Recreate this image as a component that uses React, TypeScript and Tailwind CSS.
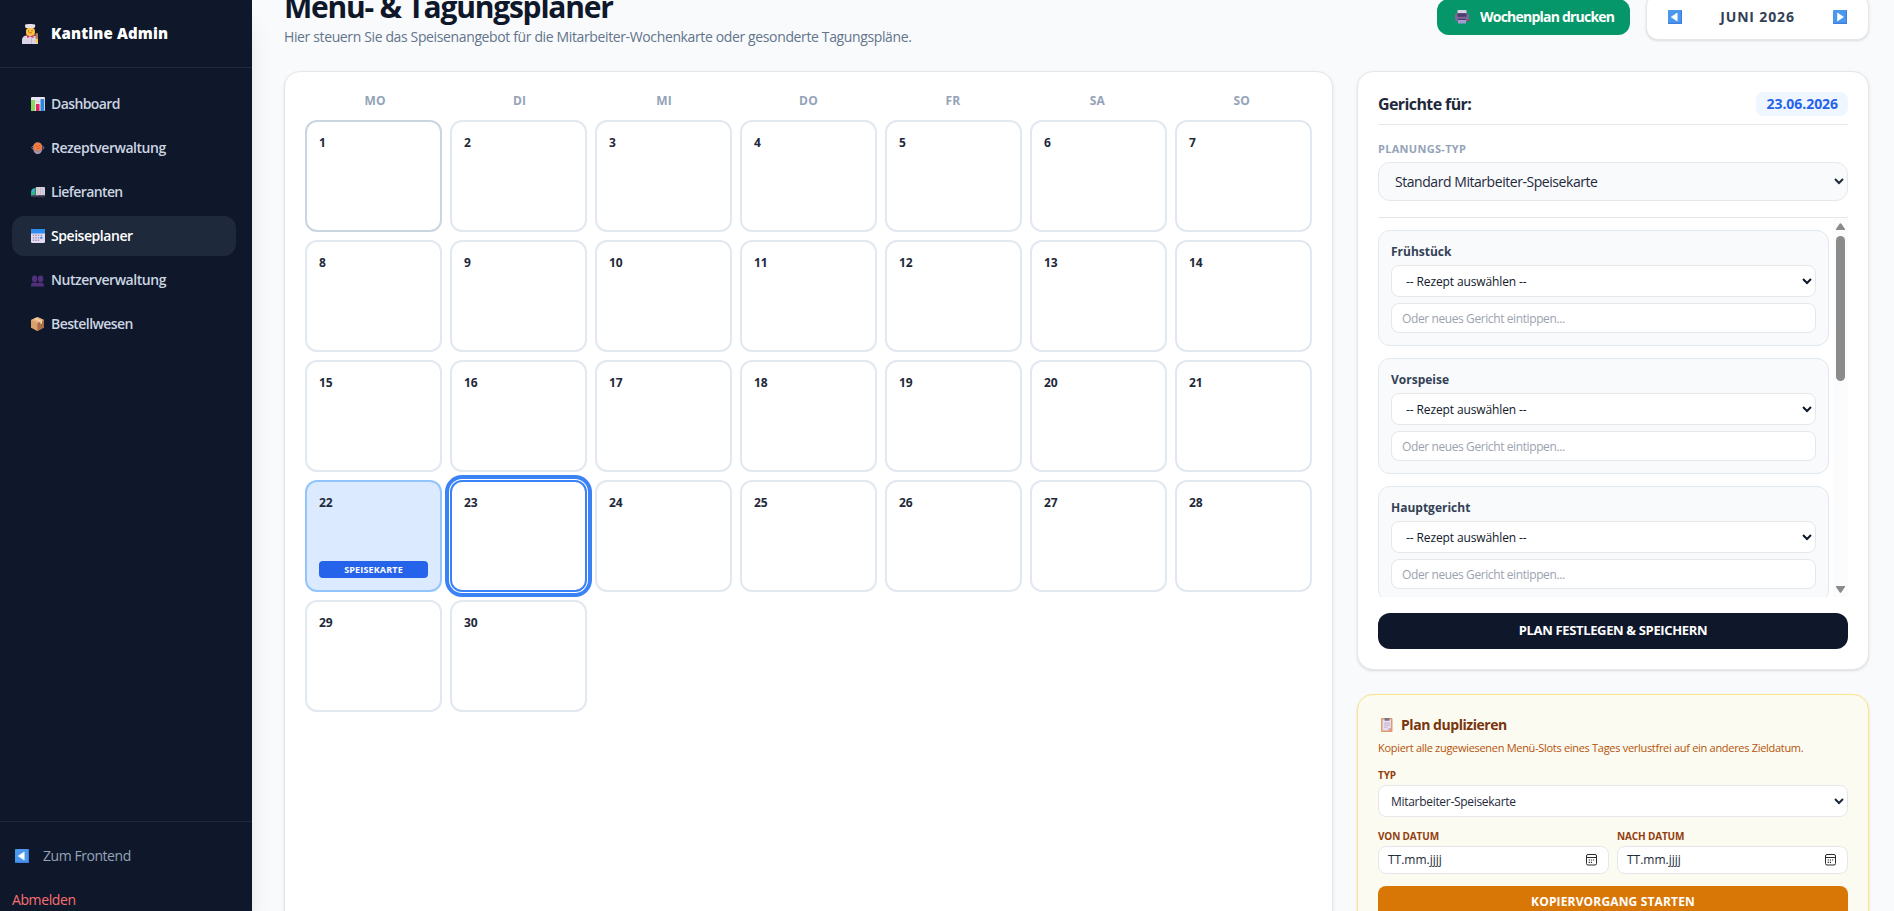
import type { ReactNode } from "react";
import clsx from "clsx";

const weekdays = ["Mo", "Di", "Mi", "Do", "Fr", "Sa", "So"];
const days = Array.from({ length: 30 }, (_, i) => i + 1);
const slots = ["Frühstück", "Vorspeise", "Hauptgericht"];

/* Icons */
function ChefIcon() {
  return (
    <svg className="w-4 h-5 shrink-0" viewBox="0 0 16 20">
      <rect x="4" y="4" width="9" height="8" rx="3" fill="#f0a63a" />
      <path d="M3 1.500C3 .5 4 0 5 .3 6 0 7 0 8 0s2 0 3 .3c1-.3 2.300.2 2.300 1.200L12.500 4h-9z" fill="#e6dfea" />
      <rect x="4.500" y="4" width="7.500" height="7" rx="3" fill="#ffc83d" />
      <circle cx="6.600" cy="6.800" r=".6" fill="#5b3a29" />
      <circle cx="10" cy="6.800" r=".6" fill="#5b3a29" />
      <path d="M6.500 8.800h3.500" stroke="#c2532f" strokeWidth=".8" />
      <path d="M0 20v-4c0-3 2-4.500 5-4.500h6c3 0 5 1.500 5 4.500v4z" fill="#dcd5e8" />
      <path d="M5 11l3 1.500L11.500 11v3L8 12.800 5 14z" fill="#e0344f" />
      <path d="M9.500 14v6" stroke="#b9aec9" strokeWidth=".7" />
      <rect x="13.500" y="9" width="2.500" height="6" rx="1.200" fill="#b9805b" />
      <rect x="13.300" y="15" width="2.500" height="4" rx="1" fill="#ffc83d" />
    </svg>
  );
}

function ChartIcon() {
  return (
    <svg className="w-[14px] h-[14px] shrink-0" viewBox="0 0 14 14">
      <rect width="14" height="14" rx="1" fill="#e9e4ef" />
      <path d="M0 4.500h14M0 9h14" stroke="#c9c1d4" strokeWidth=".5" />
      <rect y="3" width="4" height="11" fill="#86d95b" />
      <rect x="5" y="7" width="3.500" height="7" fill="#e0245e" />
      <rect x="9.500" y="2" width="3.700" height="12" fill="#2b87dd" />
    </svg>
  );
}

function PotIcon() {
  return (
    <svg className="w-[14px] h-[14px] shrink-0" viewBox="0 0 14 14">
      <path d="M2.300 5L.6 6.500 2 8.500M11.200 5l1.900 1.500-1.400 2" fill="none" stroke="#8b7a99" strokeWidth="1" />
      <path d="M2.200 7h9c0 3.500-1.500 6-4.500 6S2.200 10.500 2.200 7z" fill="#a694b4" />
      <circle cx="6.700" cy="6" r="4.700" fill="#9a8490" />
      <circle cx="6.700" cy="5.800" r="4" fill="#f47c3c" />
      <path d="M5 4.500l1.500 1M8 4l1 1M6.200 7.500l2-.5" stroke="#cf4a28" strokeWidth=".9" />
    </svg>
  );
}

function TruckIcon() {
  return (
    <svg className="w-[14px] h-[14px] shrink-0" viewBox="0 0 14 14">
      <rect x="4.800" y="2" width="9.200" height="8.500" rx=".8" fill="#d9d2de" />
      <path d="M7 2.500v7.500M9.500 2.500v7.500M12 2.500v7.500" stroke="#b5abc0" strokeWidth=".6" />
      <path d="M0 7.500C0 4.500 1.500 3 4.500 3v7.500H0z" fill="#2fb782" />
      <path d="M.8 7C1 5 1.700 4.300 3 4.200V7z" fill="#4aa3f0" />
      <path d="M0 10.300h14v1.200H0z" fill="#6b5b7e" />
      <circle cx="3" cy="11.500" r="1.300" fill="#3c2f4d" />
      <circle cx="8.500" cy="11.500" r="1.300" fill="#3c2f4d" />
      <circle cx="11.700" cy="11.500" r="1.300" fill="#3c2f4d" />
    </svg>
  );
}

function CalendarIcon() {
  return (
    <svg className="w-[14px] h-[14px] shrink-0" viewBox="0 0 14 14">
      <rect width="14" height="14" rx="1.500" fill="#e4dcf3" />
      <path d="M0 4.500V1.500C0 .6.600 0 1.500 0h11c.9 0 1.500.6 1.500 1.500v3z" fill="#2c8df0" />
      <path d="M2.500 5.500v7M5 5.500v7M7.500 5.500v7M10.500 5.500v5" stroke="#9d93b3" strokeWidth="1.400" strokeDasharray="1.600 .9" />
      <rect x="9.300" y="7.700" width="2" height="2" fill="#2c8df0" />
    </svg>
  );
}

function UsersIcon() {
  return (
    <svg className="w-[14px] h-[14px] shrink-0" viewBox="0 0 14 14">
      <rect x="1" y="2.500" width="5.300" height="6.500" rx="2.200" fill="#50307c" />
      <rect x="7" y="2.500" width="5.300" height="6.500" rx="2.200" fill="#50307c" />
      <path d="M0 13.500V12C0 10.500 1.200 9.500 3 9.500h1.500c1 0 1.600.3 2.100.8.500-.5 1.200-.8 2.200-.8h1.200c1.800 0 3 1 3 2.500v1.500z" fill="#50307c" />
    </svg>
  );
}

function BoxIcon() {
  return (
    <svg className="w-[14px] h-[14px] shrink-0" viewBox="0 0 14 14">
      <path d="M6.500 0L13 3v7.500L6.500 14 0 10.500V3z" fill="#c98f5f" />
      <path d="M0 3l6.500 3v8L0 10.500z" fill="#d9a06c" />
      <path d="M6.500 6L13 3v7.500L6.500 14z" fill="#a96f49" />
      <path d="M0 3l6.500-3L13 3 6.500 6z" fill="#e6b482" />
      <path d="M2.800 1.700l6.600 3v2.500l1.600-.8V4L4.500 1z" fill="#f3d6b0" />
    </svg>
  );
}

function PrinterIcon() {
  return (
    <svg className="w-[14px] h-[14px] shrink-0" viewBox="0 0 14 14">
      <rect x="2.500" y="0" width="9" height="5" rx=".6" fill="#d9cfe6" />
      <rect x="0" y="3.300" width="14" height="8" rx="1.500" fill="#7d6a9c" />
      <rect x="2.500" y="3.300" width="9" height="3.500" fill="#4f3b6b" />
      <rect x="3" y="9" width="8" height="4.500" rx=".5" fill="#a59bd0" />
      <path d="M3 9.300h8" stroke="#3b2a52" strokeWidth="1" />
      <rect x="12.400" y="9" width="1.600" height="2" fill="#e0245e" />
    </svg>
  );
}

function ClipboardIcon() {
  return (
    <svg className="w-3 h-[14px] shrink-0" viewBox="0 0 12 14">
      <rect width="11.500" height="14" rx="1" y="0" fill="#e09a72" />
      <path d="M1.500 1.500h8.500v8.500l-2.500 2.500h-6z" fill="#e6def0" />
      <path d="M10 10l-2.500 2.500V10z" fill="#b7aac9" />
      <rect x="3.500" y="0" width="5" height="2.800" rx=".8" fill="#77718c" />
      <path d="M3 5.200h6M3 7.200h6M3 9.200h3.500" stroke="#b4a9c4" strokeWidth=".8" />
    </svg>
  );
}

function ArrowIcon({ right = false }: { right?: boolean }) {
  return (
    <svg className="w-[14px] h-[14px] shrink-0" viewBox="0 0 14 14">
      <rect width="14" height="14" rx=".8" fill="#4a97ee" />
      <path d="M0 13.300h14M13.500 0v14" stroke="#3a6fd0" strokeWidth="1.200" opacity=".6" />
      <path
        d={right ? "M10.500 7l-6-4v8z" : "M3.200 7l6-4v8z"}
        fill="#fff"
        stroke="#fff"
        strokeWidth=".6"
        strokeLinejoin="round"
      />
    </svg>
  );
}

function DateIcon() {
  return (
    <svg className="w-[11px] h-3 shrink-0" viewBox="0 0 11 12" fill="none" stroke="#2b2b2b">
      <rect x=".5" y=".5" width="10" height="10.500" rx="1.500" />
      <path d="M.5 3.500h10" />
      <path d="M2.700 6h6M2.700 8.300h4" strokeWidth="1.200" strokeDasharray="1.200 .9" />
    </svg>
  );
}

const navItems = [
  { label: "Dashboard", icon: <ChartIcon />, track: "tracking-[-0.6px]" },
  { label: "Rezeptverwaltung", icon: <PotIcon />, track: "tracking-[-0.46px]" },
  { label: "Lieferanten", icon: <TruckIcon />, track: "tracking-[-0.6px]" },
  { label: "Speiseplaner", icon: <CalendarIcon />, track: "tracking-[-0.45px]", active: true },
  { label: "Nutzerverwaltung", icon: <UsersIcon />, track: "tracking-[-0.46px]" },
  { label: "Bestellwesen", icon: <BoxIcon />, track: "tracking-[-0.58px]" },
];

function Sidebar() {
  return (
    <aside className="w-[252px] shrink-0 h-full bg-[#0f172a] flex flex-col shadow-xl z-10">
      <div className="h-[68px] shrink-0 border-b border-[#1e293b] flex items-center gap-[13px] pl-[22px]">
        <ChefIcon />
        <span className="text-[15px] font-extrabold text-white tracking-[0.15px] whitespace-nowrap">Kantine Admin</span>
      </div>
      <nav className="flex-1 flex flex-col gap-1 pt-4 pl-3 pr-4">
        {navItems.map((item) => (
          <a
            key={item.label}
            className={clsx(
              "h-10 rounded-xl flex items-center gap-1.5 pl-[19px] text-sm font-semibold",
              item.active ? "bg-[#1e293b] text-white" : "text-[#cbd5e1]"
            )}
          >
            {item.icon}
            <span className={item.track}>{item.label}</span>
          </a>
        ))}
      </nav>
      <div className="h-[90px] shrink-0 border-t border-[#1e293b] pt-6 pl-3 text-sm">
        <a className="flex items-center gap-3.5 h-5 pl-[3px] text-[#94a3b8]">
          <ArrowIcon />
          <span className="tracking-[-0.45px]">Zum Frontend</span>
        </a>
        <a className="block mt-6 h-5 leading-5 text-[#f87171] tracking-[-0.4px]">Abmelden</a>
      </div>
    </aside>
  );
}

function DayCell({ day }: { day: number }) {
  const planned = day === 22;
  const selected = day === 23;
  return (
    <div
      className={clsx(
        "h-28 rounded-xl border-2 p-3 flex flex-col justify-between",
        planned && "bg-[#dbeafe] border-[#93c5fd]",
        selected && "bg-white border-[#3b82f6] ring-4 ring-[#3b82f6] ring-offset-1",
        !planned && !selected && "bg-white",
        day === 1 ? "border-[#cbd5e1]" : !planned && !selected && "border-[#e2e8f0]"
      )}
    >
      <span className="text-xs leading-[18px] font-bold text-[#1e293b]">{day}</span>
      {planned && (
        <span className="h-[17px] rounded bg-[#2563eb] text-white text-[9px] leading-[17px] font-bold text-center tracking-[0.15px] uppercase">
          Speisekarte
        </span>
      )}
    </div>
  );
}

function Calendar() {
  return (
    <section className="w-[1049px] h-[900px] shrink-0 bg-white border border-[#e5e7eb] rounded-2xl px-5 pt-[21px] shadow-sm">
      <div className="grid grid-cols-7 gap-1 mb-[11px] text-center text-xs font-bold text-[#94a3b8] uppercase tracking-[0.2px]">
        {weekdays.map((d) => (
          <div key={d}>{d}</div>
        ))}
      </div>
      <div className="grid grid-cols-7 gap-2">
        {days.map((d) => (
          <DayCell key={d} day={d} />
        ))}
      </div>
    </section>
  );
}

function MealSlot({ name }: { name: string }) {
  return (
    <div className="h-[116px] shrink-0 bg-[#f8fafc] border border-[#e2e8f0] rounded-xl px-3 pt-3">
      <label className="block h-[22px] leading-[18px] text-xs font-bold text-[#334155]">{name}</label>
      <select className="block w-full h-8 px-2.5 bg-white border border-[#e5e7eb] rounded-lg text-xs text-[#0f172a] tracking-[-0.12px]">
        <option>-- Rezept auswählen --</option>
      </select>
      <input
        className="block w-full h-[30px] mt-1.5 px-2.5 bg-white border border-[#e5e7eb] rounded-lg text-xs tracking-[-0.4px] placeholder:text-[#9ca3af]"
        placeholder="Oder neues Gericht eintippen..."
      />
    </div>
  );
}

function Scrollbar() {
  return (
    <div className="w-[15px] h-full bg-[#fcfcfc] flex flex-col items-center">
      <svg className="w-[9px] h-[7px] mt-[5px]" viewBox="0 0 9 7">
        <path d="M3.600.8a1 1 0 0 1 1.800 0L9 6v1H0V6z" fill="#8b8b8b" />
      </svg>
      <div className="w-[9px] h-[145px] mt-1.5 rounded-full bg-[#8b8b8b]" />
      <svg className="w-[9px] h-[7px] mt-auto mb-1" viewBox="0 0 9 7">
        <path d="M3.600 6.200a1 1 0 0 0 1.800 0L9 1V0H0v1z" fill="#8b8b8b" />
      </svg>
    </div>
  );
}

function PlanCard() {
  return (
    <section className="h-[599px] shrink-0 bg-white border border-[#e5e7eb] rounded-2xl px-5 pt-5 shadow-sm">
      <div className="flex items-start justify-between h-[33px] border-b border-[#e5e7eb]">
        <h2 className="text-base leading-6 font-bold text-[#1e293b] tracking-[-0.6px]">Gerichte für:</h2>
        <span className="h-6 leading-6 px-2.5 rounded-lg bg-[#eff6ff] text-[#2563eb] text-sm font-bold tracking-[-0.05px]">
          23.06.2026
        </span>
      </div>
      <label className="block mt-4 h-[21px] leading-4 text-[11px] font-bold text-[#94a3b8] tracking-[0.3px]">PLANUNGS-TYP</label>
      <select className="block w-full h-[39px] px-3 bg-[#f8fafc] border border-[#e5e7eb] rounded-xl text-sm text-[#1e293b] tracking-[-0.45px]">
        <option>Standard Mitarbeiter-Speisekarte</option>
      </select>
      <div className="mt-4 h-[380px] border-t border-[#e5e7eb] flex gap-1 overflow-hidden">
        <div className="flex-1 pt-3 flex flex-col gap-3">
          {slots.map((s) => (
            <MealSlot key={s} name={s} />
          ))}
        </div>
        <Scrollbar />
      </div>
      <button className="block w-full h-9 mt-4 rounded-xl bg-[#0f172a] text-white text-[13px] font-bold tracking-[-0.35px]">
        PLAN FESTLEGEN &amp; SPEICHERN
      </button>
    </section>
  );
}

function AmberLabel({ children }: { children: ReactNode }) {
  return (
    <label className="block h-[18px] leading-4 text-[10px] font-bold text-[#92400e] tracking-[-0.15px]">{children}</label>
  );
}

function DateField({ label }: { label: string }) {
  return (
    <div className="flex-1">
      <AmberLabel>{label}</AmberLabel>
      <div className="h-7 pl-[9px] pr-[11px] bg-white border border-[#e5e7eb] rounded-lg flex items-center justify-between text-xs text-[#1e293b]">
        <span>TT.mm.jjjj</span>
        <DateIcon />
      </div>
    </div>
  );
}

function CopyCard() {
  return (
    <section className="h-[260px] shrink-0 bg-[#fcfbf1] border border-[#fde68a] rounded-2xl px-5 pt-5 shadow-sm">
      <h3 className="flex items-center gap-2 h-5 pl-[3px] text-sm font-bold text-[#78350f]">
        <ClipboardIcon />
        <span className="tracking-[-0.45px]">Plan duplizieren</span>
      </h3>
      <p className="mt-1 h-[18px] leading-[18px] text-[11px] text-[#b45309] tracking-[-0.3px] whitespace-nowrap">
        Kopiert alle zugewiesenen Menü-Slots eines Tages verlustfrei auf ein anderes Zieldatum.
      </p>
      <div className="mt-[10px]">
        <AmberLabel>TYP</AmberLabel>
        <select className="block w-full h-8 px-2 bg-white border border-[#e5e7eb] rounded-lg text-xs text-[#1e293b] tracking-[-0.3px]">
          <option>Mitarbeiter-Speisekarte</option>
        </select>
      </div>
      <div className="mt-[11px] flex gap-2">
        <DateField label="VON DATUM" />
        <DateField label="NACH DATUM" />
      </div>
      <button className="block w-full h-8 mt-3 rounded-lg bg-[#d97706] text-white text-xs font-bold tracking-[0.15px]">
        KOPIERVORGANG STARTEN
      </button>
    </section>
  );
}

export default function App() {
  return (
    <div className="w-[1894px] h-[911px] overflow-hidden flex bg-[#f8fafc] font-['Open_Sans','Noto_Sans',sans-serif]">
      <Sidebar />
      <main className="flex-1 pl-8 pr-[25px]">
        {/* Header, scrolled slightly out of view */}
        <header className="-mt-[13px] h-[60px] mb-6 flex items-center justify-between">
          <div>
            <h1 className="text-3xl leading-10 font-bold text-[#0f172a] tracking-[-1.22px]">Menü- &amp; Tagungsplaner</h1>
            <p className="text-sm text-[#64748b] tracking-[-0.37px]">
              Hier steuern Sie das Speisenangebot für die Mitarbeiter-Wochenkarte oder gesonderte Tagungspläne.
            </p>
          </div>
          <div className="flex items-center gap-4">
            <button className="w-[193px] h-9 rounded-xl bg-[#059669] text-white text-sm font-bold flex items-center gap-[11px] pl-[18px] whitespace-nowrap">
              <PrinterIcon />
              <span className="tracking-[-0.78px]">Wochenplan drucken</span>
            </button>
            <div className="w-[223px] h-[46px] bg-white border border-[#e5e7eb] rounded-xl shadow-sm flex items-center justify-between px-[21px]">
              <ArrowIcon />
              <span className="text-sm font-bold text-[#334155] tracking-[0.85px]">JUNI 2026</span>
              <ArrowIcon right />
            </div>
          </div>
        </header>
        <div className="flex gap-6">
          <Calendar />
          <div className="w-[512px] flex flex-col gap-6">
            <PlanCard />
            <CopyCard />
          </div>
        </div>
      </main>
    </div>
  );
}
